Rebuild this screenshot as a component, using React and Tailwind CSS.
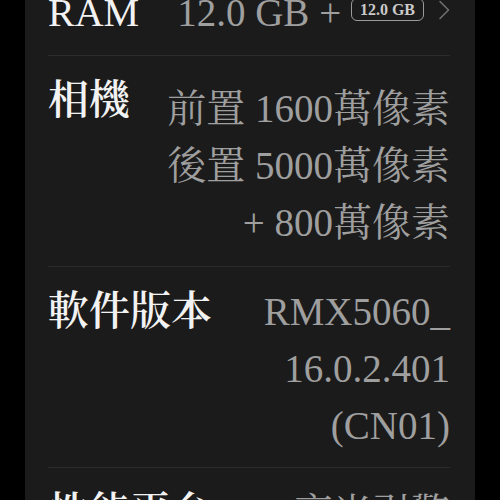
import React from 'react';

const serif = "font-['Liberation_Serif','Noto_Serif_CJK_TC','Noto_Sans_CJK_TC',serif]";

const Chevron = () => (
  <svg width="12" height="20" viewBox="0 0 12 20" fill="none" className="shrink-0">
    <path d="M2 1.5l8.5 8.5-8.5 8.5" stroke="#727272" strokeWidth="1.5" strokeLinecap="round" strokeLinejoin="round" />
  </svg>
);

const specs = [
  {
    label: '相機',
    lines: ['前置 1600萬像素', '後置 5000萬像素', '+ 800萬像素'],
    rowClass: 'pt-[16px] pb-[15px]',
    valueClass: 'mt-[8px]',
  },
  {
    label: '軟件版本',
    lines: ['RMX5060_', '16.0.2.401', '(CN01)'],
    rowClass: 'pt-[16px] pb-[13px]',
    valueClass: '',
  },
  {
    label: '性能平台',
    lines: ['高光引擎'],
    rowClass: 'pt-[16px] pb-[16px]',
    valueClass: '',
  },
];

export default function App() {
  return (
    <div className={`h-[500px] w-[500px] overflow-hidden bg-black ${serif}`}>
      <div className="mx-[25px] mt-[-32px] bg-[#1b1b1b] pl-[23px] pr-[25px] divide-y divide-[#2b2b2b]">
        {/* RAM row, partly scrolled off */}
        <div className="flex items-center justify-between pt-[16px] pb-[14px] leading-[57px]">
          <span className="text-[40px] text-[#f2f2f2]">RAM</span>
          <div className="flex items-center">
            <span className="text-[39px] text-[#9f9f9f] whitespace-pre">12.0 GB + </span>
            <span className="mb-[6px] rounded-[6px] border-[1.5px] border-[#9a9a9a] px-[8px] text-[16px] leading-[21px] font-bold text-[#cacaca]">
              12.0 GB
            </span>
            <span className="ml-[14px] mb-[6px]">
              <Chevron />
            </span>
          </div>
        </div>

        {specs.map((row) => (
          <div key={row.label} className={`flex justify-between leading-[57px] ${row.rowClass}`}>
            <span className="text-[41px] font-semibold text-[#f2f2f2] whitespace-nowrap">{row.label}</span>
            <div className={`flex flex-col items-end text-[39px] text-[#9f9f9f] ${row.valueClass}`}>
              {row.lines.map((line) => (
                <span key={line} className="whitespace-nowrap">{line}</span>
              ))}
            </div>
          </div>
        ))}
      </div>
    </div>
  );
}
